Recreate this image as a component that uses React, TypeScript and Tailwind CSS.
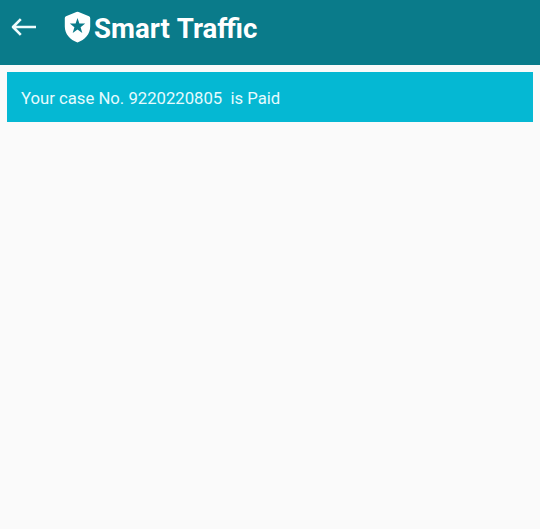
export default function App() {
  return (
    <div className="flex h-[529px] w-[540px] flex-col overflow-hidden bg-[#fafafa] font-['Roboto',sans-serif] text-white">
      <header className="flex h-[65px] shrink-0 items-start bg-[#0a7b8a] pl-[11px] pt-[11px]">
        <svg width="26" height="32" viewBox="0 0 26 32" fill="none" stroke="#effcfd" strokeWidth="2.6" strokeLinejoin="round">
          <path d="M25 16H2.5M9.8 8.2L2 16L9.8 23.8" />
        </svg>
        <svg className="ml-[27px]" width="27" height="32" viewBox="0 0 27 32">
          <path fill="white" d="M12.4 1.1Q13.5 .6 14.6 1.1L25 5.3Q26.2 5.8 26.2 7V15.5C26.2 23 21 29 13.5 31.4C6 29 .8 23 .8 15.5V7Q.8 5.8 2 5.3Z" />
          <path fill="#0a7b8a" d="M13.5 7L15.4 12.6H21.2L16.6 16.2L18.3 22L13.5 18.6L8.7 22L10.4 16.2L5.8 12.6H11.6Z" />
        </svg>
        <h1 className="ml-[3px] text-[27.6px] font-bold leading-[35px] [word-spacing:0.8px] whitespace-nowrap">Smart Traffic</h1>
      </header>
      <main className="p-[7px]">
        <div className="flex h-[50px] items-center bg-[#05b8d3] pt-[3px] pl-[14px] text-[16.7px] whitespace-pre text-[#e6fbfe]">Your case No. 9220220805  is Paid</div>
      </main>
    </div>
  );
}
